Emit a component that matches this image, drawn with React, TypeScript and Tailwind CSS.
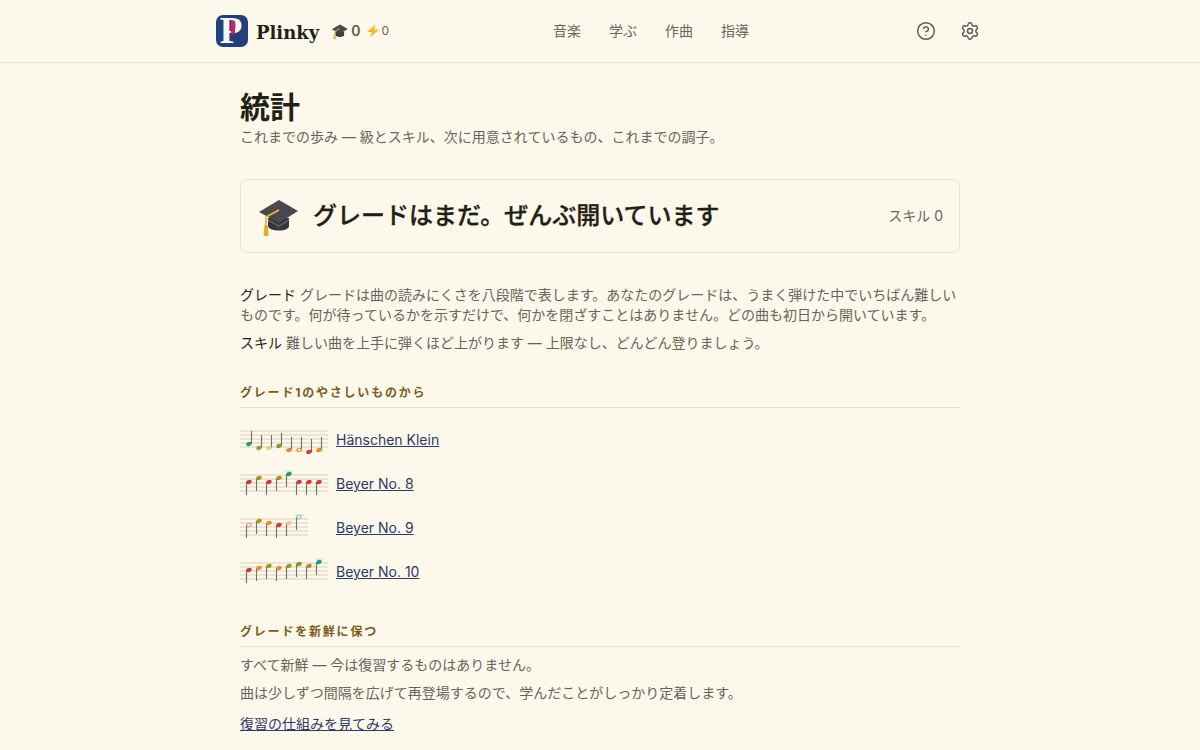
import { CircleHelp, Settings } from 'lucide-react'

const FONT = "font-['Inter','Noto_Sans_CJK_JP',sans-serif]"

type Note = { y: number; color: string; open?: boolean }

const TEAL = '#1f9d80'
const OLIVE = '#a8981e'
const PALE = '#d9d28c'
const GREEN = '#7d9e1e'
const ORANGE = '#e0912a'
const RED = '#cf3a3a'
const PEACH = '#efc99a'
const PINK = '#e58f8f'
const MINT = '#8ccab8'

const STAVES: { width: number; up?: boolean; notes: Note[] }[] = [
  {
    width: 88,
    up: true,
    notes: [
      { y: 13, color: TEAL },
      { y: 17, color: OLIVE },
      { y: 17, color: PALE },
      { y: 15, color: GREEN },
      { y: 19, color: ORANGE },
      { y: 19, color: ORANGE, open: true },
      { y: 21, color: RED },
      { y: 19, color: ORANGE },
    ],
  },
  {
    width: 88,
    notes: [
      { y: 7, color: RED },
      { y: 3, color: OLIVE },
      { y: 7, color: RED },
      { y: 3, color: OLIVE },
      { y: -1, color: TEAL },
      { y: 7, color: RED },
      { y: 7, color: RED },
      { y: 7, color: RED },
    ],
  },
  {
    width: 68,
    notes: [
      { y: 6, color: PINK, open: true },
      { y: 2, color: OLIVE },
      { y: 4, color: ORANGE },
      { y: 6, color: RED },
      { y: 4, color: PEACH },
      { y: -2, color: MINT, open: true },
    ],
  },
  {
    width: 88,
    notes: [
      { y: 7, color: RED },
      { y: 5, color: ORANGE },
      { y: 3, color: OLIVE },
      { y: 5, color: ORANGE },
      { y: 3, color: OLIVE },
      { y: 1, color: GREEN },
      { y: 3, color: OLIVE },
      { y: -1, color: TEAL },
    ],
  },
]

const SONGS = ['Hänschen Klein', 'Beyer No. 8', 'Beyer No. 9', 'Beyer No. 10']

function Staff({ width, up, notes }: { width: number; up?: boolean; notes: Note[] }) {
  return (
    <svg width="88" height="28" viewBox="0 -5 88 28" className="shrink-0">
      {[0, 4, 8, 12, 16].map((y) => (
        <line key={y} x1="0" x2={width} y1={y} y2={y} stroke="#e3decd" strokeWidth="1.3" />
      ))}
      {notes.map((n, i) => {
        const x = 9 + i * 10
        return (
          <g key={i}>
            {n.y < -0.5 && <line x1={x - 4.500} x2={x + 4.500} y1="-4" y2="-4" stroke="#e3decd" strokeWidth="1.3" />}
            {n.y > 18 && <line x1={x - 4.500} x2={x + 4.500} y1="20" y2="20" stroke="#e3decd" strokeWidth="1.3" />}
            <line
              x1={up ? x + 2.500 : x - 2.500}
              x2={up ? x + 2.500 : x - 2.500}
              y1={n.y}
              y2={up ? n.y - 13 : n.y + 13}
              stroke="#736f64"
              strokeWidth="1.100"
            />
            <ellipse
              cx={x}
              cy={n.y}
              rx={n.open ? 2.300 : 2.800}
              ry={n.open ? 1.600 : 2}
              fill={n.open ? '#fdf8ec' : n.color}
              stroke={n.open ? n.color : 'none'}
              strokeWidth="1.100"
              transform={`rotate(-20 ${x} ${n.y})`}
            />
          </g>
        )
      })}
    </svg>
  )
}

function Cap({ size }: { size: number }) {
  return (
    <svg width={size} height={size} viewBox="0 0 44 44" className="shrink-0">
      <path d="M11 24v8c0 2.500 5 4.500 11 4.500s10-2 10-4.500v-8z" fill="#35363b" />
      <path d="M2 18 22 6l19 11-19 12z" fill="#48494e" />
      <path d="M11 25l11 6.500L32 25v1.500L22 33l-11-6.500z" fill="#66676b" />
      <path d="M22 16 9 23v9" stroke="#eebb30" strokeWidth="1.800" fill="none" />
      <path d="M7.500 31h3l1.300 10-2.800 1.500L6.500 41z" fill="#e8a92a" />
    </svg>
  )
}

function Bolt() {
  return (
    <svg width="14" height="14" viewBox="0 0 14 14" className="shrink-0">
      <path d="M9.500.500 1 8h5l-2 5.500L13 5.500H8z" fill="#f5b921" />
    </svg>
  )
}

function Logo() {
  return (
    <div className="relative w-8 h-8 shrink-0 rounded-[7px] bg-[#24407a] flex items-center justify-center pr-0.5">
      <span className="font-['Liberation_Serif',serif] font-bold text-[37px] leading-8 text-[#fdf8ec]">P</span>
      <div className="absolute left-[14.500px] top-[6px] w-[4.400px] h-[13px] bg-[#d81b7c]" />
    </div>
  )
}

function SectionTitle({ children }: { children: string }) {
  return (
    <h3 className="text-xs font-bold tracking-[0.15em] leading-4 text-[#7a5c1c] pb-1.5 border-b border-[#e6e1d2]">{children}</h3>
  )
}

export default function App() {
  return (
    <div className={`min-h-[750px] bg-[#fdf8ec] text-[#696458] ${FONT}`}>
      <header className="h-[63px] border-b border-[#e6e1d2]">
        <div className="w-[768px] mx-auto h-[62px] flex justify-between items-center pr-1">
          <div className="flex items-center">
            <Logo />
            <span className="ml-2 font-['DejaVu_Serif',serif] font-bold text-[18px] text-[#231f14] mt-0.5">Plinky</span>
            <span className="ml-3 flex items-center gap-0.5">
              <Cap size={18} />
              <span className="text-sm font-semibold text-[#5f5b52]">0</span>
            </span>
            <span className="ml-[6px] flex items-center gap-px text-xs">
              <Bolt />0
            </span>
          </div>
          <nav className="flex gap-7 mr-[3px] text-sm text-[#6a665c]">
            <span>音楽</span>
            <span>学ぶ</span>
            <span>作曲</span>
            <span>指導</span>
          </nav>
          <div className="flex items-center gap-6 text-[#5f5b52]">
            <CircleHelp size={20} strokeWidth={1.8} />
            <Settings size={20} strokeWidth={1.8} />
          </div>
        </div>
      </header>

      <main className="w-[720px] mx-auto pt-[26px]">
        <h1 className="text-[30px] leading-9 font-bold text-[#231f14]">統計</h1>
        <p className="text-sm leading-5 mt-0.5">これまでの歩み — 級とスキル、次に用意されているもの、これまでの調子。</p>

        <section className="mt-[32px] h-[74px] border border-[#e6e1d2] rounded-lg flex items-center px-4">
          <Cap size={44} />
          <h2 className="ml-3 text-2xl font-medium [-webkit-text-stroke:0.3px_#231f14] text-[#231f14] flex-1">グレードはまだ。ぜんぶ開いています</h2>
          <span className="text-sm">スキル 0</span>
        </section>

        <p className="text-sm leading-5 mt-8">
          <span className="text-[#231f14]">グレード</span> グレードは曲の読みにくさを八段階で表します。あなたのグレードは、うまく弾けた中でいちばん難しいものです。何が待っているかを示すだけで、何かを閉ざすことはありません。どの曲も初日から開いています。
        </p>
        <p className="text-sm leading-5 mt-2">
          <span className="text-[#231f14]">スキル</span> 難しい曲を上手に弾くほど上がります — 上限なし、どんどん登りましょう。
        </p>

        <div className="mt-[32px]">
          <SectionTitle>グレード1のやさしいものから</SectionTitle>
        </div>
        <ul className="mt-[18px] flex flex-col gap-4">
          {SONGS.map((song, i) => (
            <li key={song} className="flex items-center gap-2 h-7">
              <Staff {...STAVES[i]} />
              <a className="text-sm underline text-[#2b3a67]">{song}</a>
            </li>
          ))}
        </ul>

        <div className="mt-[38px]">
          <SectionTitle>グレードを新鮮に保つ</SectionTitle>
        </div>
        <p className="text-sm leading-5 mt-2">すべて新鮮 — 今は復習するものはありません。</p>
        <p className="text-sm leading-5 mt-2">曲は少しずつ間隔を広げて再登場するので、学んだことがしっかり定着します。</p>
        <a className="block text-sm leading-5 mt-[11px] underline text-[#2b3a67]">復習の仕組みを見てみる</a>
      </main>
    </div>
  )
}
